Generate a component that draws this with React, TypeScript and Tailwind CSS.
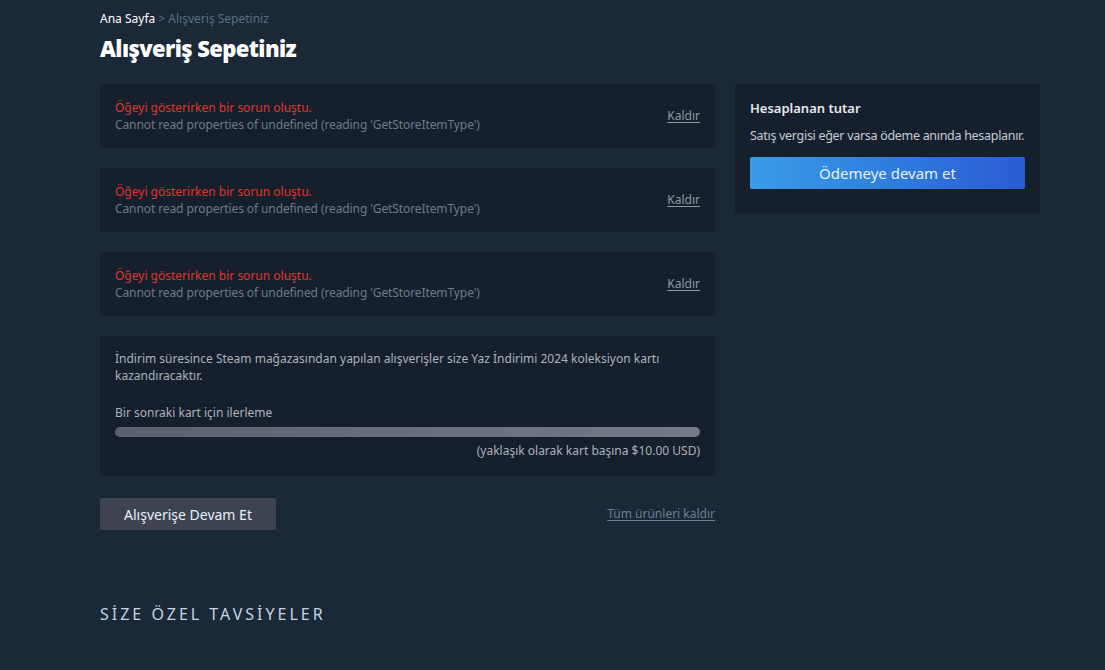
import React from "react";

const ErrorItem = () => (
  <div className="flex h-16 items-center justify-between bg-[#16202d] px-[15px]">
    <div className="flex flex-col text-[12px] leading-[17px]">
      <span className="text-[#e0332b]">Öğeyi gösterirken bir sorun oluştu.</span>
      <span className="tracking-[-0.1px] text-[#6c7a87]">
        Cannot read properties of undefined (reading 'GetStoreItemType')
      </span>
    </div>
    <a className="text-[12px] text-[#8f98a0] underline underline-offset-2">Kaldır</a>
  </div>
);

export default function App() {
  return (
    <div
      className="min-h-[670px] w-full bg-[#1b2838] pl-[100px]"
      style={{ fontFamily: '"Noto Sans", "Open Sans", sans-serif' }}
    >
      <div className="w-[940px]">
        <div className="pt-[11px] text-[12px] leading-4">
          <span className="text-white">Ana Sayfa</span>
          <span className="text-[#56707f]"> &gt; Alışveriş Sepetiniz</span>
        </div>
        <h1 className="mt-[7px] text-[22px] leading-7 font-black tracking-[-0.6px] text-white">
          Alışveriş Sepetiniz
        </h1>

        <div className="mt-[22px] flex gap-5">
          <div className="flex w-[615px] flex-col gap-5">
            <ErrorItem />
            <ErrorItem />
            <ErrorItem />

            <div className="flex h-[140px] flex-col bg-[#16202d] px-[15px] pt-[14px] text-[12px] leading-[17px] text-[#acb2b8]">
              <p>
                İndirim süresince Steam mağazasından yapılan alışverişler size Yaz İndirimi 2024 koleksiyon kartı
                kazandıracaktır.
              </p>
              <p className="mt-[20px]">Bir sonraki kart için ilerleme</p>
              <div className="mt-[6px] h-[10px] w-full rounded-full bg-gradient-to-r from-[#5b626b] to-[#747b85]" />
              <p className="mt-[5px] text-right">(yaklaşık olarak kart başına $10.00 USD)</p>
            </div>

            <div className="mt-[2px] flex items-center justify-between">
              <button className="h-8 w-[176px] rounded-[2px] bg-[#3d4450] text-[14px] text-[#e5f0fb]">
                Alışverişe Devam Et
              </button>
              <a className="text-[12px] text-[#6b7f8f] underline underline-offset-2">Tüm ürünleri kaldır</a>
            </div>
          </div>

          <div className="h-[130px] w-[305px] bg-[#16202d] px-[15px] pt-[16px]">
            <div className="text-[13px] leading-4 font-semibold text-[#e5e9ee]">Hesaplanan tutar</div>
            <div className="mt-[12px] whitespace-nowrap text-[12.5px] leading-4 tracking-[-0.3px] text-[#c6ccd2]">
              Satış vergisi eğer varsa ödeme anında hesaplanır.
            </div>
            <button className="mt-[13px] h-8 w-full rounded-[2px] bg-gradient-to-r from-[#3a9ce9] to-[#2a5cd2] text-[15px] text-[#e5f0fb]">
              Ödemeye devam et
            </button>
          </div>
        </div>

        <h2 className="mt-[74px] text-[16px] leading-5 tracking-[3px] text-[#c7d5e0]">SİZE ÖZEL TAVSİYELER</h2>
      </div>
    </div>
  );
}
